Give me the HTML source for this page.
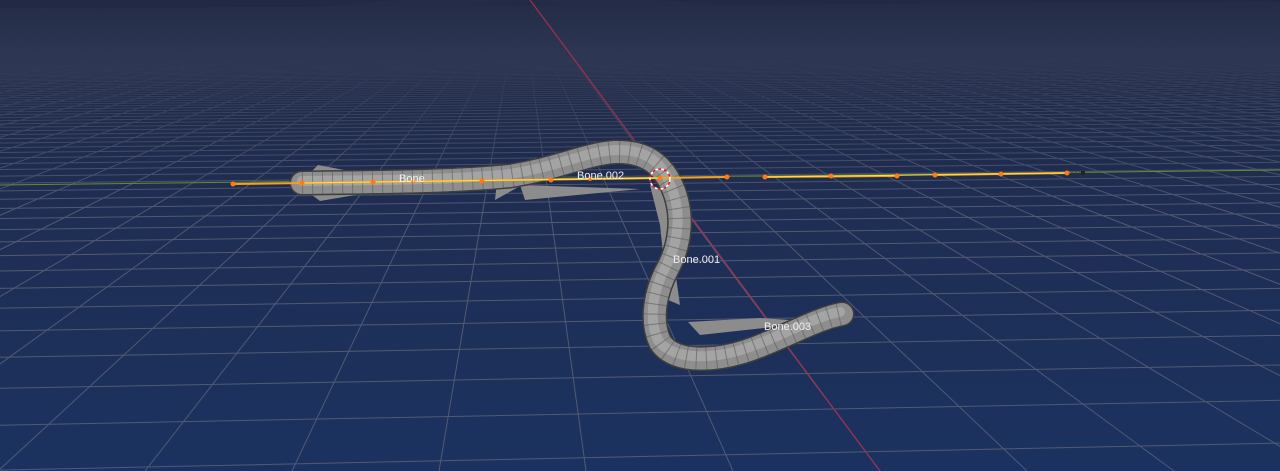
<!DOCTYPE html>
<html><head><meta charset="utf-8"><style>
html,body{margin:0;padding:0;background:#1f2d50;overflow:hidden}
svg{display:block}
text{font-family:"Liberation Sans",sans-serif;font-size:11px;fill:#f0f0f0}
</style></head><body>
<svg id="s" width="1280" height="471" viewBox="0 0 1280 471" xmlns="http://www.w3.org/2000/svg">
<defs>
<linearGradient id="bg" x1="0" y1="0" x2="0" y2="1">
<stop offset="0" stop-color="#212944"/><stop offset="0.4" stop-color="#1f2d52"/><stop offset="1" stop-color="#1b3260"/>
</linearGradient>
<linearGradient id="fade" x1="0" y1="0" x2="0" y2="1">
<stop offset="0" stop-color="#212944" stop-opacity="0.95"/><stop offset="0.45" stop-color="#202b4a" stop-opacity="0.6"/><stop offset="1" stop-color="#1f2d50" stop-opacity="0"/>
</linearGradient>
</defs>
<rect width="1280" height="471" fill="url(#bg)"/>
<g id="grid" stroke="#525a72" stroke-width="1" fill="none"></g>
<rect width="1280" height="210" fill="url(#fade)"/>
<line x1="530" y1="0" x2="880" y2="471" stroke="#a03050" stroke-width="1.2"/>
<line x1="0" y1="185" x2="1280" y2="170" stroke="#6a8a30" stroke-width="1"/>
<g fill="#8c8c8c">
<polygon points="318,165 370,175 300,183"/>
<polygon points="300,186 385,190 320,201"/>
<polygon points="498,172 520,162 540,175 495,200"/>
<polygon points="520,185 640,189 525,200"/>
<polygon points="650,185 660,225 668,300 680,305 664,192"/>
<polygon points="688,322 760,318 820,322 700,335"/>
</g>
<path d="M302,183 C380,182 450,182 510,176 C560,168 585,154 615,152 C645,151 662,164 672,186 C685,215 680,245 668,268 C655,292 650,320 660,342 C675,365 720,362 760,346 C795,332 820,318 842,314" stroke="#3e3e3e" stroke-width="25" fill="none" stroke-linecap="round"/>
<path d="M302,183 C380,182 450,182 510,176 C560,168 585,154 615,152 C645,151 662,164 672,186 C685,215 680,245 668,268 C655,292 650,320 660,342 C675,365 720,362 760,346 C795,332 820,318 842,314" stroke="#8e8e8e" stroke-width="22" fill="none" stroke-linecap="round"/>
<path d="M302,181 C380,180 450,180 510,174 C560,166 585,152 615,150 C645,149 662,162 670,184 C683,213 678,243 666,266 C653,290 648,318 658,340 C673,362 718,360 758,344 C793,330 818,316 840,312" stroke="#a4a4a4" stroke-width="10" fill="none" stroke-linecap="round"/>
<path d="M302,183 C380,182 450,182 510,176 C560,168 585,154 615,152 C645,151 662,164 672,186 C685,215 680,245 668,268 C655,292 650,320 660,342 C675,365 720,362 760,346 C795,332 820,318 842,314" stroke="#5a5a5a" stroke-opacity="0.6" stroke-width="22" fill="none" stroke-dasharray="1,9"/>
<g stroke="#f7a020" stroke-width="2" fill="none">
<line x1="233" y1="184" x2="660" y2="178"/>
<line x1="660" y1="178" x2="727" y2="177"/>
<line x1="765" y1="177" x2="897" y2="176"/>
<line x1="935" y1="175" x2="1067" y2="173"/>
</g>
<g stroke="#ffe040" stroke-width="1" fill="none">
<line x1="300" y1="183" x2="660" y2="178"/>
<line x1="765" y1="177" x2="1067" y2="173"/>
</g>
<line x1="727" y1="177" x2="765" y2="177" stroke="#304020" stroke-dasharray="2,2"/>
<line x1="1067" y1="173" x2="1085" y2="173" stroke="#304020" stroke-dasharray="2,2"/>
<rect x="1081" y="171" width="4" height="4" fill="#222"/>
<g fill="#ff7a10">
<circle cx="233" cy="184" r="2.5"/><circle cx="302" cy="183" r="2.5"/><circle cx="373" cy="182" r="2.5"/>
<circle cx="413" cy="181" r="2"/><circle cx="482" cy="181" r="2.5"/><circle cx="551" cy="180" r="2.5"/>
<circle cx="590" cy="179" r="2"/><circle cx="660" cy="178" r="2.5"/><circle cx="727" cy="177" r="2.5"/>
<circle cx="765" cy="177" r="2.5"/><circle cx="831" cy="176" r="2.5"/><circle cx="897" cy="176" r="2.5"/>
<circle cx="935" cy="175" r="2.5"/><circle cx="1001" cy="174" r="2.5"/><circle cx="1067" cy="173" r="2.5"/>
</g>
<circle cx="660" cy="179" r="10" fill="none" stroke="#fff" stroke-width="1.5" stroke-dasharray="3,3"/>
<circle cx="660" cy="179" r="10" fill="none" stroke="#e02020" stroke-width="1.5" stroke-dasharray="3,3" stroke-dashoffset="3"/>
<text x="399" y="182">Bone</text>
<text x="577" y="179">Bone.002</text>
<text x="673" y="263">Bone.001</text>
<text x="764" y="330">Bone.003</text>
</svg>
<script>
var g=document.getElementById('grid'),ns='http://www.w3.org/2000/svg';
for(var n=1;n<800;n++){var y=4400/(n+0.42); if(y>520) continue; if(y<6) break;
var t=6+0.045*y;
var l=document.createElementNS(ns,'line');
l.setAttribute('x1',0);l.setAttribute('x2',1280);l.setAttribute('y1',y+3);l.setAttribute('y2',y+3-t);
g.appendChild(l);}
var vx=520,vy=-10;
for(var i=-40;i<=40;i++){var bx=880+i*147;var l=document.createElementNS(ns,'line');
l.setAttribute('x1',vx);l.setAttribute('y1',vy);l.setAttribute('x2',bx);l.setAttribute('y2',471);
g.appendChild(l);}
</script>
</body></html>
